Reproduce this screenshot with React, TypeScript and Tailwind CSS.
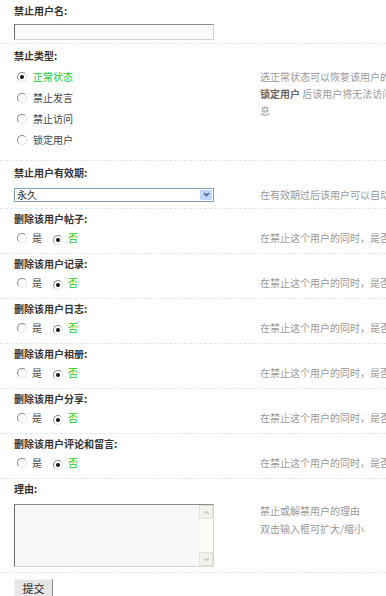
import React from 'react';

const font = { fontFamily: '"Noto Sans CJK SC", "Noto Sans", sans-serif' };

const Radio: React.FC<{ checked?: boolean }> = ({ checked }) => (
  <span className="relative inline-flex h-[10px] w-[10px] shrink-0 items-center justify-center rounded-full border border-t-[#8a8a8a] border-l-[#8a8a8a] border-r-[#e2e2e2] border-b-[#e2e2e2] bg-white">
    {checked && <span className="h-[4px] w-[4px] rounded-full bg-[#111]" />}
  </span>
);

const Label: React.FC<{ children: React.ReactNode; h?: string }> = ({ children, h = 'h-[19px]' }) => (
  <div className={`${h} flex items-center text-[10px] font-bold text-[#333]`}>{children}</div>
);

const Desc: React.FC<{ children: React.ReactNode }> = ({ children }) => (
  <div className="whitespace-nowrap text-[10px] text-[#999]">{children}</div>
);

const YesNo: React.FC<{ label: string }> = ({ label }) => (
  <section className="border-t border-dashed border-[#dbe7f3] pb-[6px]">
    <div className="pl-[14px]">
      <Label>{label}</Label>
    </div>
    <div className="flex h-[19px] items-center">
      <div className="flex w-[260px] shrink-0 items-center pl-[17px] text-[10px]">
        <Radio />
        <span className="ml-[5px] text-[#444]">是</span>
        <span className="ml-[11px]"><Radio checked /></span>
        <span className="ml-[5px] text-[#22cc22]">否</span>
      </div>
      <Desc>在禁止这个用户的同时，是否删除该用户的所有内容</Desc>
    </div>
  </section>
);

const banTypes = [
  { name: '正常状态', checked: true },
  { name: '禁止发言' },
  { name: '禁止访问' },
  { name: '锁定用户' },
];

export default function App() {
  return (
    <div className="w-full overflow-hidden bg-white" style={font}>
      <section className="pl-[14px]">
        <Label h="h-[20px]">禁止用户名:</Label>
        <div className="mt-[4px] mb-[3px] h-[16px] w-[200px] border border-t-[#8c8c8c] border-l-[#6c6c6c] border-r-[#d4d4d4] border-b-[#d4d4d4] bg-[#f9f9f9]" />
      </section>

      <section className="border-t border-dashed border-[#dbe7f3] pb-[10px]">
        <div className="pl-[14px]">
          <Label h="h-[22px]">禁止类型:</Label>
        </div>
        <div className="flex">
          <div className="w-[260px] shrink-0 pl-[17px] text-[10px]">
            {banTypes.map((t) => (
              <div key={t.name} className="flex h-[21px] items-center">
                <Radio checked={t.checked} />
                <span className={`ml-[6px] ${t.checked ? 'text-[#22cc22]' : 'text-[#444]'}`}>{t.name}</span>
              </div>
            ))}
          </div>
          <div className="pt-[2px] text-[10px] leading-[17px] text-[#999]">
            <div className="whitespace-nowrap">选正常状态可以恢复该用户的管理权限</div>
            <div className="whitespace-nowrap">
              <b className="text-[#666]">锁定用户</b> 后该用户将无法访问站点的任何信
            </div>
            <div>息</div>
          </div>
        </div>
      </section>

      <section className="border-t border-dashed border-[#dbe7f3] pb-[6px]">
        <div className="pl-[14px]">
          <Label h="h-[22px]">禁止用户有效期:</Label>
        </div>
        <div className="mt-[4px] flex items-center">
          <div className="w-[260px] shrink-0 pl-[14px]">
            <div className="flex h-[14px] w-[200px] items-center border border-[#7f9db9] bg-white text-[10px] text-[#222]">
              <span className="flex-1 pl-[2px]">永久</span>
              <span className="mr-[1px] flex h-[10px] w-[12px] items-center justify-center rounded-[1px] bg-[#c3d5fd]">
                <svg width="7" height="5" viewBox="0 0 7 5">
                  <path d="M1 1 L3.5 3.5 L6 1" fill="none" stroke="#4d6185" strokeWidth="1.6" />
                </svg>
              </span>
            </div>
          </div>
          <Desc>在有效期过后该用户可以自动解除禁止状态</Desc>
        </div>
      </section>

      <YesNo label="删除该用户帖子:" />
      <YesNo label="删除该用户记录:" />
      <YesNo label="删除该用户日志:" />
      <YesNo label="删除该用户相册:" />
      <YesNo label="删除该用户分享:" />
      <YesNo label="删除该用户评论和留言:" />

      <section className="border-t border-dashed border-[#dbe7f3] pb-[5px]">
        <div className="pl-[14px]">
          <Label>理由:</Label>
        </div>
        <div className="mt-[6px] flex">
          <div className="w-[260px] shrink-0 pl-[14px]">
            <div className="flex h-[63px] w-[200px] border border-t-[#8c8c8c] border-l-[#6c6c6c] border-r-[#d4d4d4] border-b-[#d4d4d4] bg-[#f7f7f7]">
              <div className="flex-1" />
              <div className="flex w-[14px] flex-col justify-between bg-[#fcfcf7]">
                <div className="flex h-[14px] items-center justify-center border border-[#e3e3dc] bg-[#f2f2ec]">
                  <svg width="7" height="5" viewBox="0 0 7 5">
                    <path d="M1 4 L3.5 1.5 L6 4" fill="none" stroke="#c4c4bb" strokeWidth="1.2" />
                  </svg>
                </div>
                <div className="flex h-[14px] items-center justify-center border border-[#e3e3dc] bg-[#f2f2ec]">
                  <svg width="7" height="5" viewBox="0 0 7 5">
                    <path d="M1 1 L3.5 3.5 L6 1" fill="none" stroke="#c4c4bb" strokeWidth="1.2" />
                  </svg>
                </div>
              </div>
            </div>
          </div>
          <div className="-mt-[2px] text-[10px] leading-[18px] text-[#999]">
            <div className="whitespace-nowrap">禁止或解禁用户的理由</div>
            <div className="whitespace-nowrap">双击输入框可扩大/缩小</div>
          </div>
        </div>
      </section>

      <section className="border-t border-dashed border-[#dbe7f3] pl-[14px] pt-[6px]">
        <button className="flex h-[20px] w-[39px] items-start justify-center border border-t-[#f4f4f4] border-l-[#f4f4f4] border-r-[#8a8a8a] border-b-[#8a8a8a] bg-[#e6e6e6] pt-[1px] text-[11px] leading-[14px] text-[#222]">
          提交
        </button>
      </section>
    </div>
  );
}
